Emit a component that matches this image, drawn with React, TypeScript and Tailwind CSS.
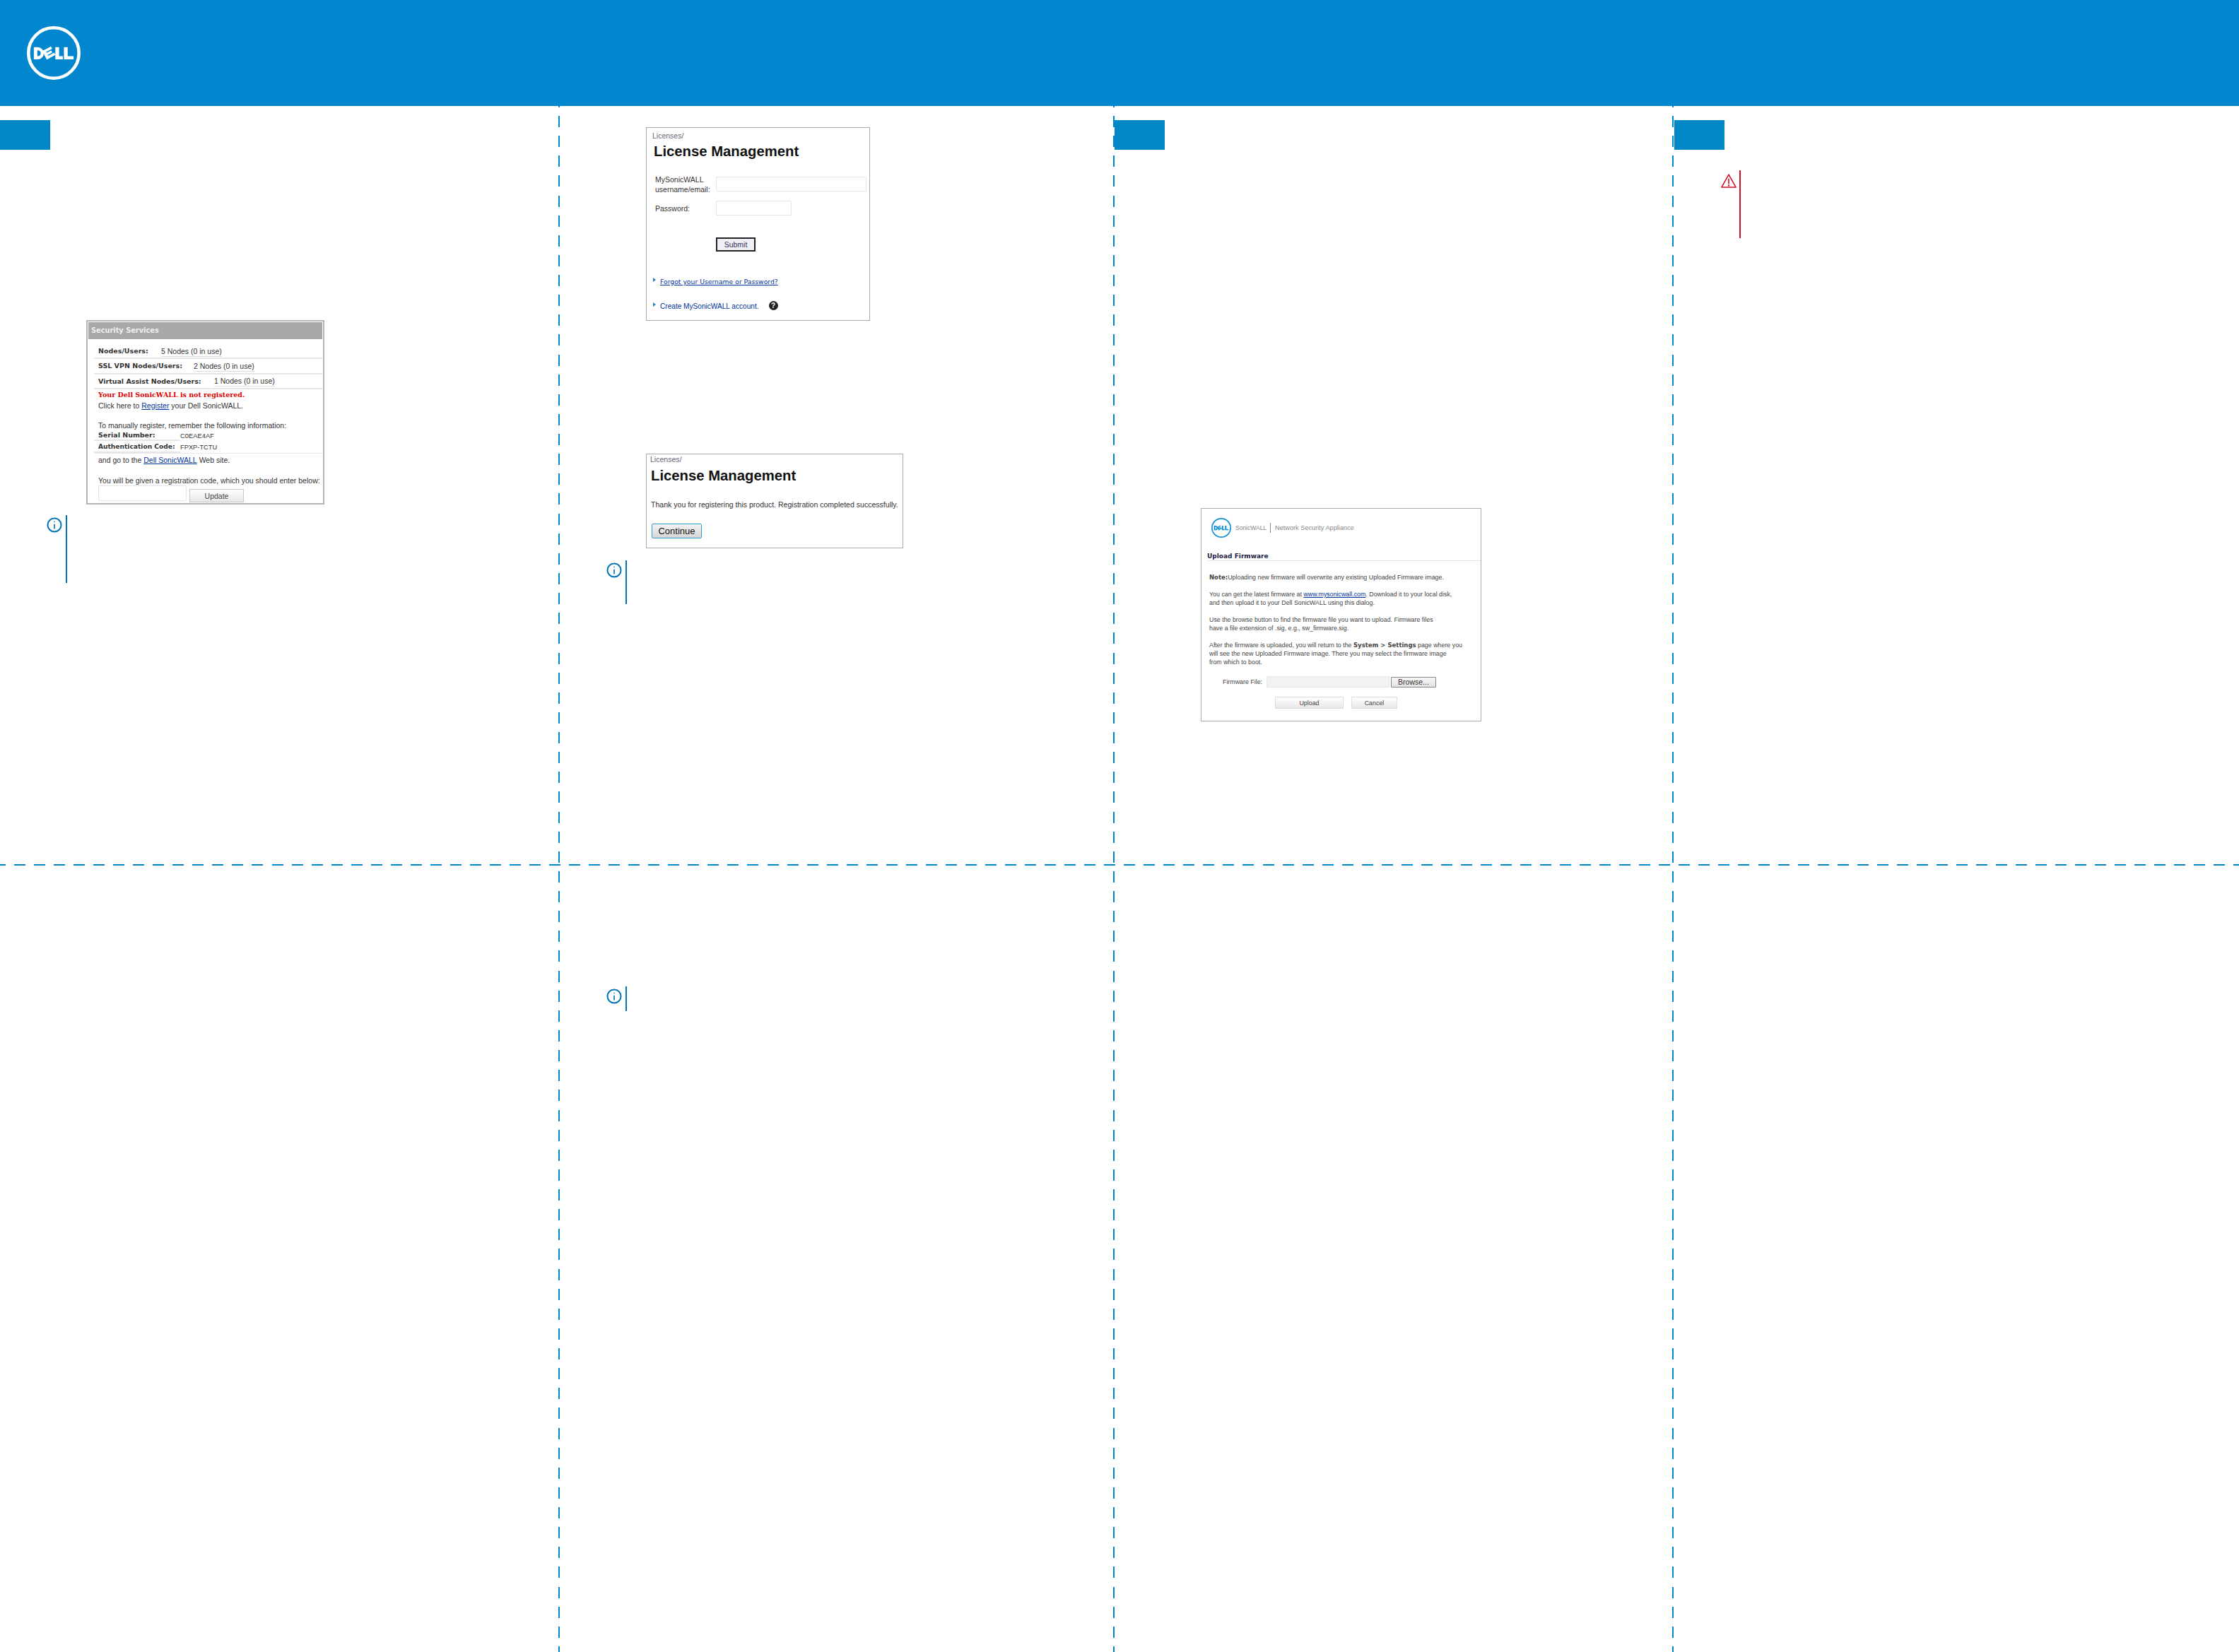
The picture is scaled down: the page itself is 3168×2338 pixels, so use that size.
const SANS = "font-['Liberation_Sans',Arial,sans-serif]";

function DellLogo({ className, color }: { className: string; color: string }) {
  return (
    <svg viewBox="0 0 100 100" className={className} fill={color}>
      <circle cx="50" cy="50" r="47" fill="none" stroke={color} strokeWidth="6" />
      <path fillRule="evenodd" d="M13 39h7a11.500 11.500 0 0 1 0 23h-7zM19.500 45v11h1a5.500 5.500 0 0 0 0-11z" />
      <g transform="rotate(-28 41 50)">
        <rect x="32" y="41" width="5.500" height="18" />
        <rect x="32" y="41" width="18" height="5" />
        <rect x="32" y="47.800" width="15" height="4.400" />
        <rect x="32" y="54" width="18" height="5" />
      </g>
      <path d="M53 39h7v17h7v6H53zM69 39h7v17h11v6H69z" />
    </svg>
  );
}

function InfoNote({ barClass }: { barClass: string }) {
  return (
    <div className="flex items-start">
      <svg viewBox="0 0 24 24" className="mt-[3px] h-[22px] w-[22px]" fill="none" stroke="#0076b8" strokeWidth="2.200">
        <circle cx="12" cy="12" r="10.400" />
        <path d="M12 10.500v7.500" strokeWidth="1.800" />
        <circle cx="12" cy="7" r="0.500" fill="#0076b8" strokeWidth="1" />
      </svg>
      <div className={`ml-[5px] w-[2px] bg-[#0076b8] ${barClass}`} />
    </div>
  );
}

function WarningNote() {
  return (
    <div className="flex items-start">
      <svg viewBox="0 0 24 24" className="mt-[4px] h-[22px] w-[22px]" fill="none" stroke="#ce1126" strokeWidth="1.700" strokeLinejoin="round">
        <path d="M12 2.200 23 21.800H1z" />
        <path d="M12 8.500v8" strokeWidth="1.800" />
        <circle cx="12" cy="19" r="0.500" fill="#ce1126" />
      </svg>
      <div className="ml-[4px] h-[96px] w-[2px] bg-[#ce1126]" />
    </div>
  );
}

function Badge() {
  return <div className="h-[42px] w-[71px] bg-[#0287c6]" />;
}

function VLine() {
  return (
    <div className="h-full w-[2px] shrink-0 bg-[repeating-linear-gradient(to_bottom,#0287cf_14px,#0287cf_30px,transparent_30px,transparent_42.130px)]" />
  );
}

function SecurityPanel() {
  const rowBorder = "border-b-2 border-[#e6e6e6]";
  const label = "font-['DejaVu_Sans',sans-serif] font-bold text-[9.500px] text-[#333]";
  const val = "border-b border-[#ddd] text-[#333]";
  return (
    <div className={`ml-[122px] mt-[241px] h-[261px] w-[337px] border-2 border-[#b4b4b4] p-px text-[10.500px] leading-[14px] text-[#333] ${SANS}`}>
      <div className="flex h-[24px] items-center bg-[#a9a9a9] pl-[4px] font-['DejaVu_Sans',sans-serif] text-[9.800px] font-bold text-[#eeeeee]">
        Security Services
      </div>
      <div className="pl-[8px]">
        <div className={`flex h-[28px] items-center pl-[6px] pt-[8px] ${rowBorder}`}>
          <span className={`${label} w-[89px]`}>Nodes/Users:</span>
          <span className={val}>5 Nodes (0 in use)</span>
        </div>
        <div className={`flex h-[22px] items-center pl-[6px] ${rowBorder}`}>
          <span className={`${label} w-[135px]`}>SSL VPN Nodes/Users:</span>
          <span className={val}>2 Nodes (0 in use)</span>
        </div>
        <div className={`flex h-[21px] items-center pl-[6px] ${rowBorder}`}>
          <span className={`${label} w-[164px]`}>Virtual Assist Nodes/Users:</span>
          <span className={val}>1 Nodes (0 in use)</span>
        </div>
        <div className="pl-[6px]">
          <div className="flex h-[15px] items-center font-['DejaVu_Serif',serif] text-[9.500px] font-bold text-[#dd0000]">Your Dell SonicWALL is not registered.</div>
          <div className="flex h-[15px] items-center whitespace-pre">
            Click here to <a className="text-[#003399] underline">Register</a> your Dell SonicWALL.
          </div>
          <div className="mt-[14px] h-[14px]">To manually register, remember the following information:</div>
        </div>
        <div className="flex h-[15px]">
          <div className={`flex w-[122px] items-center pl-[6px] ${rowBorder} ${label}`}>Serial Number:</div>
          <div className="flex items-center text-[9.400px]">C0EAE4AF</div>
        </div>
        <div className="flex h-[18px] border-b border-[#e6e6e6]">
          <div className={`flex w-[122px] items-center whitespace-nowrap pl-[6px] ${rowBorder} font-['DejaVu_Sans',sans-serif] text-[9.100px] font-bold text-[#333]`}>Authentication Code:</div>
          <div className="flex items-center text-[9.300px]">FPXP-TCTU</div>
        </div>
        <div className="pl-[6px]">
          <div className="flex h-[18px] items-center whitespace-pre">
            and go to the <a className="text-[#003399] underline">Dell SonicWALL</a> Web site.
          </div>
          <div className="mt-[13px] h-[14px] whitespace-nowrap">You will be given a registration code, which you should enter below:</div>
          <div className="flex items-start">
            <div className="h-[22px] w-[125px] rounded-[2px] border border-[#e4e4ea] bg-white" />
            <div className="ml-[4px] mt-[5px] flex h-[19px] w-[77px] items-center justify-center border border-[#c8c8c8] bg-[linear-gradient(to_bottom,#ffffff,#e8e8e8)] text-[#444]">
              Update
            </div>
          </div>
        </div>
      </div>
    </div>
  );
}

function Triangle() {
  return (
    <svg viewBox="0 0 4 6" className="mt-[1px] h-[6px] w-[4px]" fill="#2f7fb8">
      <path d="M0 0 4 3 0 6z" />
    </svg>
  );
}

function LicenseLogin() {
  return (
    <div className={`ml-[122px] mt-[30px] h-[274px] w-[317px] border border-[#aaaaaa] text-[10.500px] leading-[14px] text-[#333] ${SANS}`}>
      <div className="ml-[8px] mt-[4px] h-[14px] text-[#667]">Licenses/</div>
      <h1 className="ml-[10px] mt-[2px] text-[20.300px] font-bold leading-[26px] text-[#111]">License Management</h1>
      <div className="ml-[12px] mt-[20px] flex">
        <div className="w-[86px]">
          <div>MySonicWALL</div>
          <div>username/email:</div>
        </div>
        <div className="mt-[3px] h-[21px] w-[213px] rounded-[2px] border border-[#e2e4ee]" />
      </div>
      <div className="ml-[12px] mt-[9px] flex">
        <div className="flex h-[21px] w-[86px] items-center">Password:</div>
        <div className="h-[21px] w-[107px] rounded-[2px] border border-[#e2e4ee]" />
      </div>
      <div className="ml-[98px] mt-[31px] flex h-[20px] w-[56px] items-center justify-center border-2 border-[#222] bg-[#efeff5] text-[10.500px] text-[#335]">Submit</div>
      <div className="ml-[9px] mt-[36px] flex items-start">
        <div className="mr-[6px]"><Triangle /></div>
        <a className="font-['DejaVu_Sans',sans-serif] text-[9.250px] text-[#003399] underline">Forgot your Username or Password?</a>
      </div>
      <div className="ml-[9px] mt-[21px] flex items-start">
        <div className="mr-[6px]"><Triangle /></div>
        <span className="text-[10.100px] text-[#003399]">Create MySonicWALL account.</span>
        <span className="ml-[14px] mt-[-1px] flex h-[13px] w-[13px] items-center justify-center rounded-full bg-[#222] text-[10px] font-bold leading-none text-white">?</span>
      </div>
    </div>
  );
}

function LicenseDone() {
  return (
    <div className={`ml-[122px] mt-[188px] h-[134px] w-[364px] border border-[#aaaaaa] text-[10.550px] leading-[14px] text-[#333] ${SANS}`}>
      <div className="ml-[5px] h-[14px] text-[#667]">Licenses/</div>
      <h1 className="ml-[6px] mt-[3px] text-[20.300px] font-bold leading-[26px] text-[#111]">License Management</h1>
      <div className="ml-[6px] mt-[21px] whitespace-nowrap">Thank you for registering this product. Registration completed successfully.</div>
      <div className="ml-[7px] mt-[20px] flex h-[21px] w-[71px] items-center justify-center rounded-[2px] border border-[#2f9fd0] bg-[linear-gradient(to_bottom,#f4f4f4,#d6d6d6)] text-[13px] text-[#111]">
        Continue
      </div>
    </div>
  );
}

function FirmwarePanel() {
  return (
    <div className={`ml-[122px] mt-[507px] h-[302px] w-[397px] border border-[#aaaaaa] text-[8.850px] leading-[12px] text-[#444] ${SANS}`}>
      <div className="ml-[14px] mt-[13px] flex h-[28px] items-center text-[9.200px] text-[#888]">
        <DellLogo className="h-[28px] w-[28px]" color="#0d8fd4" />
        <span className="ml-[6px] w-[49px] text-[8.500px]">SonicWALL</span>
        <span className="h-[14px] w-px bg-[#888]" />
        <span className="ml-[6px] whitespace-nowrap">Network Security Appliance</span>
      </div>
      <div className="ml-[8px] mt-[20px] h-[13px] border-b border-[#e4e4e4] font-['DejaVu_Sans',sans-serif] text-[9px] font-bold leading-[12px] text-[#224]">Upload Firmware</div>
      <div className="ml-[11px] mt-[17px] whitespace-nowrap">
        <p><b className="font-['DejaVu_Sans',sans-serif] text-[8.500px]">Note:</b>Uploading new firmware will overwrite any existing Uploaded Firmware image.</p>
        <p className="mt-[12px]">You can get the latest firmware at <a className="text-[#003399] underline">www.mysonicwall.com</a>. Download it to your local disk,</p>
        <p>and then upload it to your Dell SonicWALL using this dialog.</p>
        <p className="mt-[12px]">Use the browse button to find the firmware file you want to upload. Firmware files</p>
        <p>have a file extension of .sig, e.g., sw_firmware.sig.</p>
        <p className="mt-[12px]">After the firmware is uploaded, you will return to the <b className="font-['DejaVu_Sans',sans-serif] text-[8.500px]">System &gt; Settings</b> page where you</p>
        <p>will see the new Uploaded Firmware image. There you may select the firmware image</p>
        <p>from which to boot.</p>
      </div>
      <div className="mt-[14px] flex h-[16px] items-center">
        <span className="ml-[30px] w-[62px] whitespace-nowrap">Firmware File:</span>
        <div className="h-[16px] w-[174px] border border-[#e8e8e8] bg-[#f2f2f2]" />
        <div className="ml-[2px] flex h-[15px] w-[64px] items-center justify-center rounded-[1px] border border-[#888] bg-[linear-gradient(to_bottom,#f8f8f8,#e2e2e2)] text-[10.500px] text-[#333]">Browse...</div>
      </div>
      <div className="ml-[104px] mt-[13px] flex gap-[11px]">
        <div className="flex h-[17px] w-[97px] items-center justify-center border border-[#ddd] bg-[linear-gradient(to_bottom,#ffffff,#e8e8e8)]">Upload</div>
        <div className="flex h-[17px] w-[65px] items-center justify-center border border-[#ddd] bg-[linear-gradient(to_bottom,#ffffff,#e8e8e8)]">Cancel</div>
      </div>
    </div>
  );
}

export default function App() {
  return (
    <div className="h-[2338px] w-[3168px] overflow-hidden bg-white">
      <header className="flex h-[150px] items-center bg-[#0287cf] pl-[38px]">
        <DellLogo className="h-[76px] w-[76px]" color="#ffffff" />
      </header>
      <main className="relative flex h-[2188px]">
        <section className="w-[790px] pt-[20px]">
          <Badge />
          <SecurityPanel />
          <div className="ml-[66px] mt-[15px]"><InfoNote barClass="h-[96px]" /></div>
        </section>
        <VLine />
        <section className="flex w-[783px] flex-col">
          <LicenseLogin />
          <LicenseDone />
          <div className="ml-[66px] mt-[17px]"><InfoNote barClass="h-[62px]" /></div>
          <div className="ml-[66px] mt-[541px]"><InfoNote barClass="h-[35px]" /></div>
        </section>
        <VLine />
        <section className="w-[789px] pt-[20px]">
          <Badge />
          <FirmwarePanel />
        </section>
        <VLine />
        <section className="flex-1 pt-[20px]">
          <div className="ml-px"><Badge /></div>
          <div className="ml-[67px] mt-[29px]"><WarningNote /></div>
        </section>
        <div className="absolute left-0 top-[1073px] h-[2px] w-full bg-[repeating-linear-gradient(to_right,#0287cf_20px,#0287cf_36px,transparent_36px,transparent_48.040px)]" />
      </main>
    </div>
  );
}
